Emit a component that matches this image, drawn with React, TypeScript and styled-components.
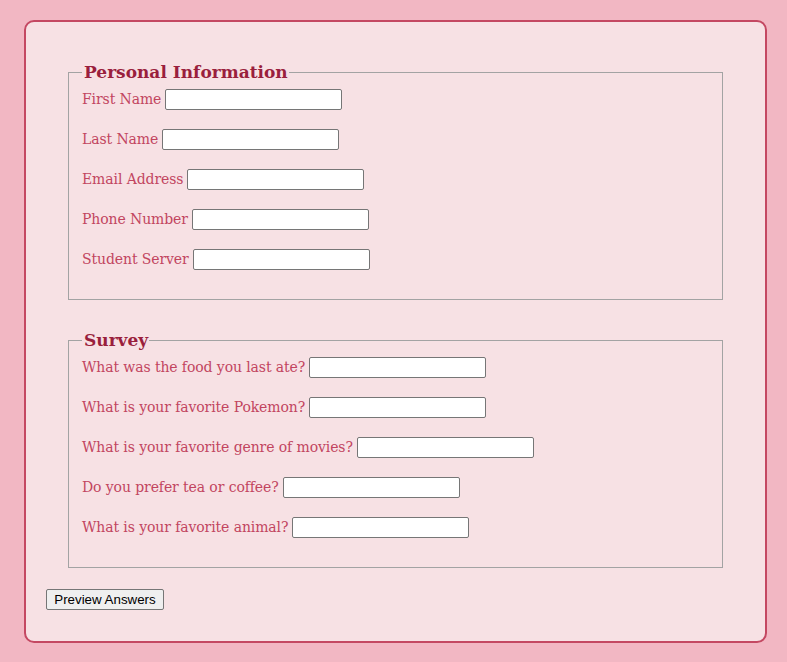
import React from "react";
import styled, { createGlobalStyle } from "styled-components";

const Global = createGlobalStyle`
  html, body { margin: 0; padding: 0; }
  body {
    background: #f2b7c3;
    font-family: "DejaVu Serif", Georgia, serif;
    width: 787px;
    height: 662px;
    overflow: hidden;
  }
`;

const Card = styled.form`
  margin: 20px 20px 0 24px;
  padding: 39px 20px 31px 20px;
  background: #f7e1e4;
  border: 2px solid #c44862;
  border-radius: 10px;
  display: flex;
  flex-direction: column;
  align-items: flex-start;
`;

const Fieldset = styled.fieldset`
  align-self: stretch;
  margin: 0 22px;
  padding: 6px 13px 10px 13px;
  border: 1px solid #a3a3a3;
  & + & { margin-top: 29px; }
`;

const Legend = styled.legend`
  padding: 0 1px 0 2px;
  font-family: "DejaVu Serif", Georgia, serif;
  font-weight: bold;
  font-size: 17px;
  line-height: 22px;
  color: #9a1f3d;
`;

const Row = styled.div`
  display: flex;
  align-items: center;
  gap: 4px;
  height: 21px;
  margin-bottom: 19px;
`;

const Label = styled.label`
  font-family: "DejaVu Serif", Georgia, serif;
  font-size: 14px;
  letter-spacing: -0.1px;
  color: #c2455f;
  white-space: nowrap;
  position: relative;
  top: -1px;
`;

const Input = styled.input`
  box-sizing: border-box;
  width: 177px;
  height: 21px;
  margin: 0;
  padding: 1px 2px;
  border: 1px solid #767676;
  border-radius: 2px;
  background: #fff;
  font-family: "Liberation Sans", Arial, sans-serif;
  font-size: 13.333px;
`;

const Button = styled.button`
  margin-top: 21px;
  box-sizing: border-box;
  width: 118px;
  height: 21px;
  padding: 0;
  border: 1px solid #767676;
  border-radius: 2px;
  background: #efefef;
  color: #000;
  font-family: "Liberation Sans", Arial, sans-serif;
  font-size: 13.333px;
  line-height: 19px;
`;

const personal = [
  ["first", "First Name"],
  ["last", "Last Name"],
  ["email", "Email Address"],
  ["phone", "Phone Number"],
  ["server", "Student Server"],
];

const survey = [
  ["food", "What was the food you last ate?"],
  ["pokemon", "What is your favorite Pokemon?"],
  ["genre", "What is your favorite genre of movies?"],
  ["drink", "Do you prefer tea or coffee?"],
  ["animal", "What is your favorite animal?"],
];

const Field = ({ id, text }: { id: string; text: string }) => (
  <Row>
    <Label htmlFor={id}>{text}</Label>
    <Input id={id} type="text" />
  </Row>
);

export default function App() {
  return (
    <>
      <Global />
      <Card onSubmit={(e) => e.preventDefault()}>
        <Fieldset>
          <Legend>Personal Information</Legend>
          {personal.map(([id, t]) => (
            <Field key={id} id={id} text={t} />
          ))}
        </Fieldset>
        <Fieldset>
          <Legend>Survey</Legend>
          {survey.map(([id, t]) => (
            <Field key={id} id={id} text={t} />
          ))}
        </Fieldset>
        <Button type="button">Preview Answers</Button>
      </Card>
    </>
  );
}
